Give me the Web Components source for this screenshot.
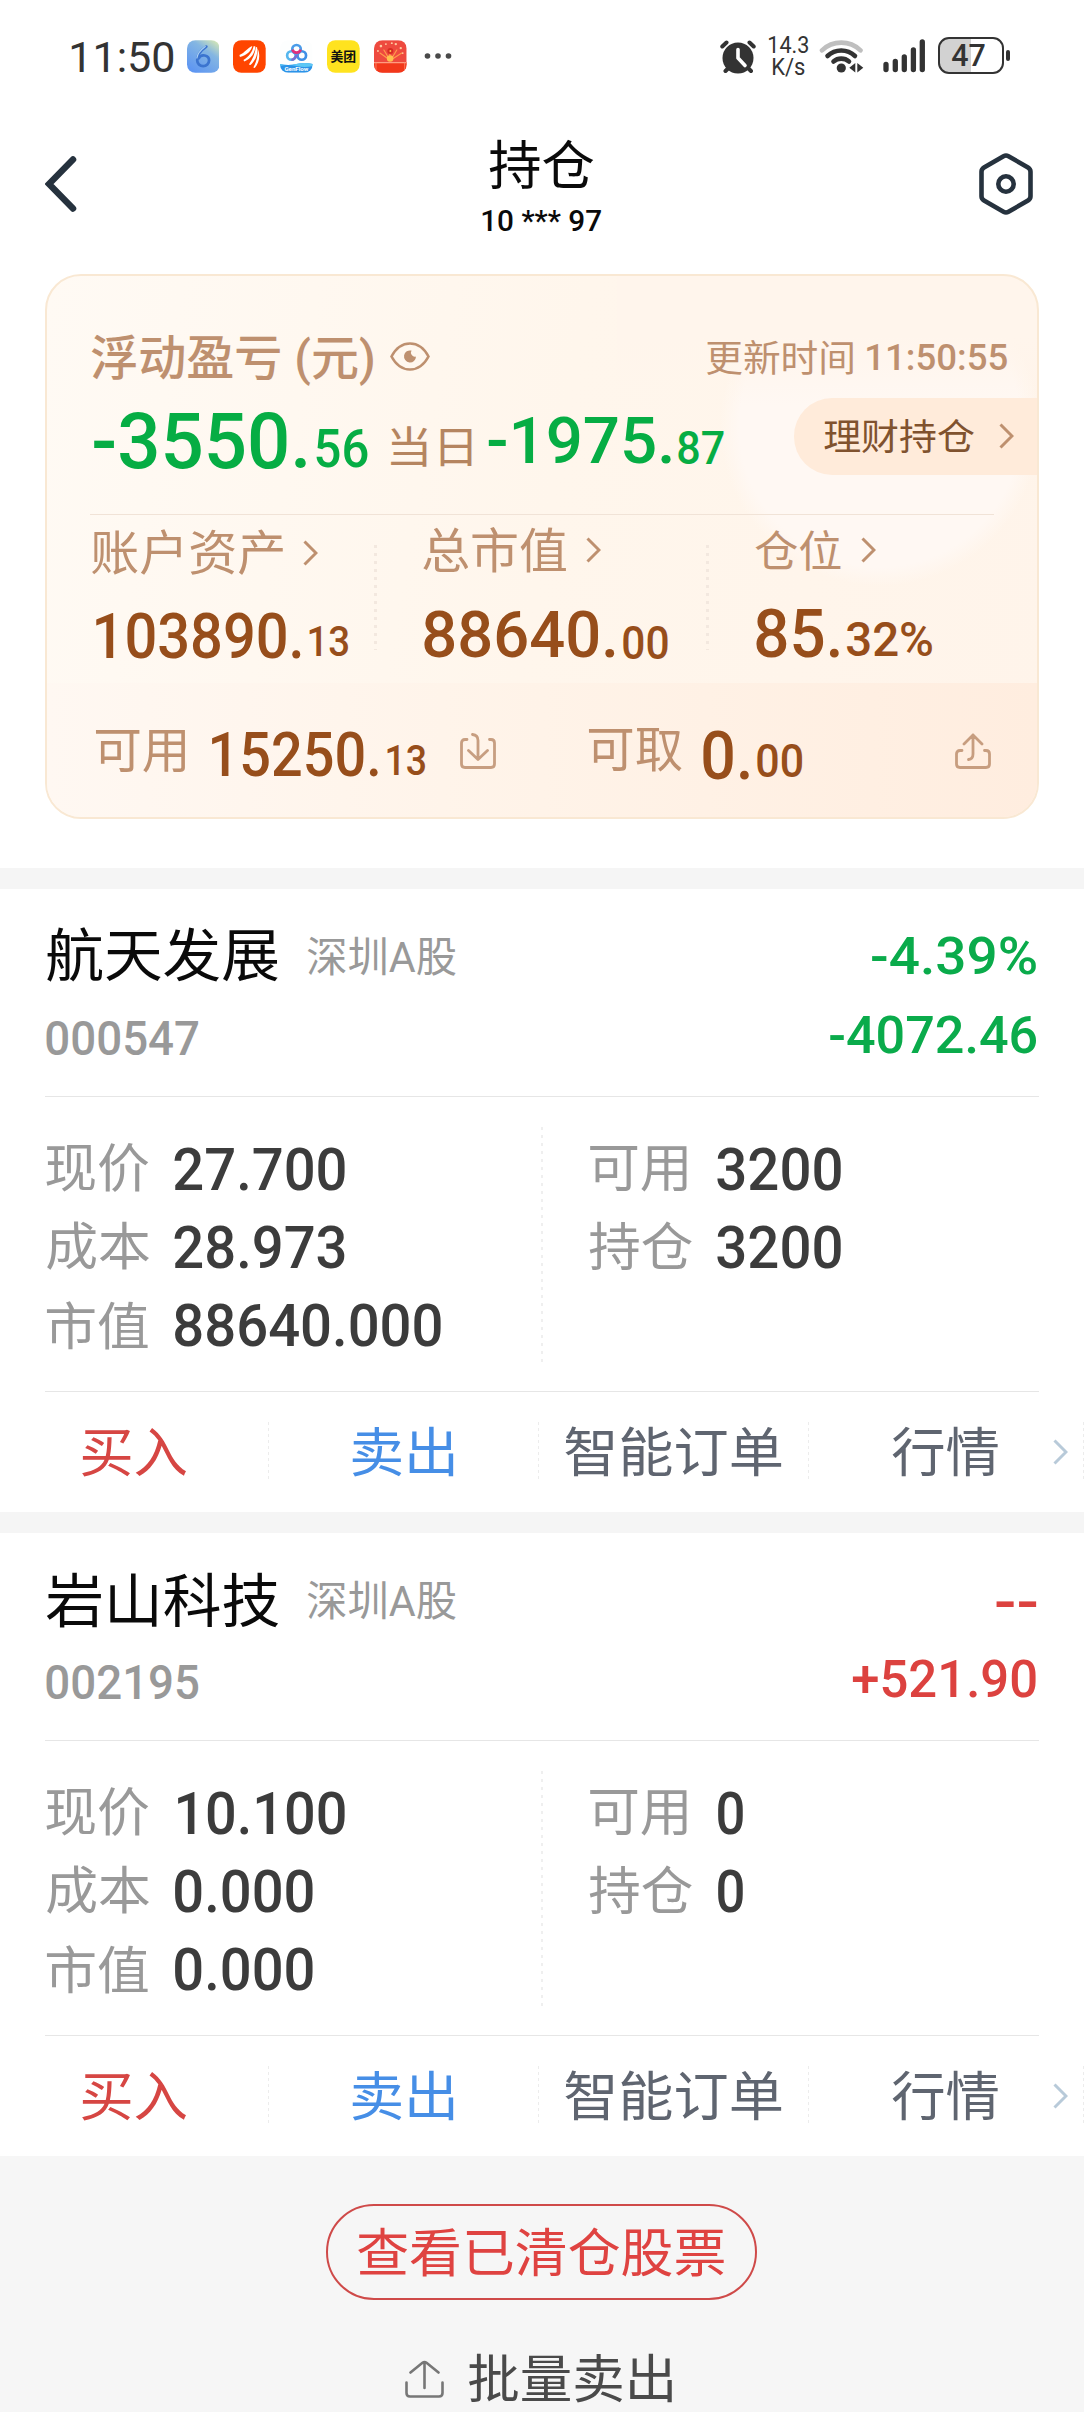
<!DOCTYPE html>
<html lang="zh-CN">
<head>
<meta charset="utf-8">
<meta name="viewport" content="width=device-width">
<title>持仓</title>
<style>
  html, body {
    margin: 0;
    background: #fff;
    font-family: Roboto, "Noto Sans CJK SC", sans-serif;
  }
  body {
    width: 1084px;
    height: 2412px;
    overflow: hidden;
    display: flex;
    flex-direction: column;
  }
</style>
</head>
<body>
<status-bar></status-bar>
<page-header></page-header>
<asset-card></asset-card>
<stock-card
  name="航天发展|232" code="000547|152"
  percent="-4.39%|164|39|47" profit="-4072.46|206" tone="#0aab4b"
  price="27.700|171" cost="28.973|171" value="88640.000|267"
  usable="3200|124" hold="3200|124"></stock-card>
<stock-card
  name="岩山科技|232" code="002195|152"
  percent="--|40|6|68" profit="+521.90|184" tone="#dc423f"
  price="10.100|168|3" cost="0.000|139" value="0.000|139"
  usable="0|26" hold="0|26"></stock-card>
<page-footer></page-footer>

<script>
const FAMILY = 'Roboto, "Noto Sans CJK SC", sans-serif';
const ctx = document.createElement("canvas").getContext("2d");

// Text whose glyphs fill a box of w x h pixels. "size" fixes the font size instead of h.
class InkText extends HTMLElement {
  constructor() {
    super();
    this.attachShadow({ mode: "open" });
    this.shadowRoot.innerHTML = `
      <style>
        :host {
          display: block;
          flex: none;
        }
        span {
          display: block;
          width: max-content;
          white-space: pre;
          transform-origin: 0 0;
        }
      </style>
      <span><slot></slot></span>
    `;
  }
  connectedCallback() {
    const w = Number(this.getAttribute("w"));
    const h = Number(this.getAttribute("h"));
    const weight = this.getAttribute("weight") || "400";
    const text = this.textContent;
    const span = this.shadowRoot.querySelector("span");

    let size = Number(this.getAttribute("size"));
    if (!size) {
      ctx.font = `${weight} 100px ${FAMILY}`;
      const m = ctx.measureText(text);
      size = (h * 100) / (m.actualBoundingBoxAscent + m.actualBoundingBoxDescent);
    }
    ctx.font = `${weight} ${size}px ${FAMILY}`;
    const m = ctx.measureText(text);
    const scale = w / (m.actualBoundingBoxLeft + m.actualBoundingBoxRight);
    const baseline = (h + m.fontBoundingBoxAscent - m.fontBoundingBoxDescent) / 2;
    const tx = m.actualBoundingBoxLeft * scale - 0.8;
    const ty = m.actualBoundingBoxAscent - baseline;

    this.style.width = w + "px";
    this.style.height = h + "px";
    span.style.font = `${weight} ${size}px/${h}px ${FAMILY}`;
    span.style.transform = `translate(${tx}px, ${ty}px) scaleX(${scale})`;
  }
}
customElements.define("ink-text", InkText);

// o: ml, mt = margins, weight, size, color
function ink(text, w, h, o = {}) {
  const style = `margin:${o.mt || 0}px 0 0 ${o.ml || 0}px;${o.color ? "color:" + o.color : ""}`;
  return `<ink-text w="${w}" h="${h}" weight="${o.weight || 400}" ${o.size ? `size="${o.size}"` : ""} style="${style}">${text}</ink-text>`;
}

class ChevronIcon extends HTMLElement {
  connectedCallback() {
    this.attachShadow({ mode: "open" });
    this.shadowRoot.innerHTML = `
      <style>
        :host { display: block; flex: none; width: 15px; height: 26px; }
        svg { display: block; }
      </style>
      <svg width="15" height="26" viewBox="0 0 15 26" fill="none" stroke="currentColor" stroke-width="3">
        <path d="M1.5 1.5 13 13 1.5 24.5"/>
      </svg>
    `;
  }
}
customElements.define("chevron-icon", ChevronIcon);

class StatusBar extends HTMLElement {
  constructor() {
    super();
    this.attachShadow({ mode: "open" });
    this.shadowRoot.innerHTML = `
      <style>
        :host {
          display: flex;
          justify-content: space-between;
          height: 110px;
          flex: none;
          box-sizing: border-box;
          padding: 36px 74px 0 72px;
          color: #333;
        }
        div { display: flex; align-items: flex-start; }
        svg { display: block; flex: none; }
        .apps { gap: 14.3px; margin: 4px 0 0 12.5px; }
        .net { flex-direction: column; margin: 1px 0 0 13px; }
        .battery {
          box-sizing: border-box;
          width: 66px;
          height: 37px;
          margin: 1px 0 0 12.5px;
          border: 2.5px solid #333;
          border-radius: 11px;
          background: linear-gradient(90deg, #d2d2d2 50%, #fff 50%);
        }
        .nub { width: 4px; height: 11px; margin: 14px 0 0 2.5px; border-radius: 2px; background: #333; }
      </style>
      <div>
        ${ink("11:50", 102, 32, { mt: 5.5 })}
        <div class="apps">
          <svg width="32.7" height="33" viewBox="0 0 33 33">
            <defs><linearGradient id="a" x1="1" y1="0" x2=".3" y2="1">
              <stop offset="0" stop-color="#e3efaf"/><stop offset=".4" stop-color="#84b6e2"/><stop offset="1" stop-color="#5f97f2"/>
            </linearGradient></defs>
            <rect width="33" height="33" rx="8.5" fill="url(#a)"/>
            <path d="M19.500 6.500C15 9.500 10.300 14.500 10.300 20.300a6 6 0 0 0 12 0 5.500 5 0 0 0-10.500-2" fill="none" stroke="#3b74cf" stroke-width="2.800" stroke-linecap="round" stroke-linejoin="round"/>
            <path d="M18.500 6.500C14.500 9.500 10.500 14 10 18" fill="none" stroke="#a9cff3" stroke-width="1.200" stroke-linecap="round"/>
          </svg>
          <svg width="32.7" height="33" viewBox="0 0 33 33">
            <rect width="33" height="33" rx="8.5" fill="#ff4500"/>
            <g fill="#fff">
              <path d="M6.500 15C12 13 15 7.500 19.500 6c-1 5-5.500 9.500-12.500 11z"/>
              <path d="M10.500 20C16 17 19.500 12 20.800 6.200h1.700C22.500 13 18 19 11.500 21.500z"/>
              <path d="M16 24.500C20 19 22.500 13 23 6.800l1.300.4c1 7-1.300 13-6.600 18z"/>
              <path d="M20.500 27.500c3.500-6 4.800-12.500 4.300-19 3 6 2 14-2.800 19.500z"/>
            </g>
          </svg>
          <svg width="32.7" height="33" viewBox="0 0 33 33">
            <defs><clipPath id="c"><rect width="33" height="33" rx="8.5"/></clipPath></defs>
            <g clip-path="url(#c)">
              <rect width="33" height="33" fill="#fdfefe"/>
              <path d="M0 24q8 2 16.500 0T33 24v9H0z" fill="#2b93e8"/>
              <path d="M0 24q8 2 16.500 0T33 24v2q-8 2-16.500 0T0 26z" fill="#5cc7f5"/>
            </g>
            <g fill="none" stroke-width="2.7">
              <circle cx="11.500" cy="15.500" r="4.300" stroke="#55b6ee"/>
              <circle cx="22" cy="15.500" r="4.300" stroke="#3f8fe6"/>
              <path d="M11.500 19.800a4.300 4.300 0 0 0 3.500-1.800l3.500-5" stroke="#7a6ed0"/>
              <circle cx="16.700" cy="9.200" r="4.300" stroke="#4a9ce9"/>
              <path d="M12.600 9.500a4.300 4.300 0 0 0 8.200 0" stroke="#e0307c"/>
            </g>
            <text x="16.500" y="31" font-size="6.200" font-weight="700" text-anchor="middle" fill="#fff" textLength="24">GenFlow</text>
          </svg>
          <svg width="32.7" height="33" viewBox="0 0 33 33">
            <rect width="33" height="33" rx="8.5" fill="#ffe31f"/>
            <text x="16.500" y="21.500" font-size="13" font-weight="700" text-anchor="middle" fill="#111" textLength="26">美团</text>
          </svg>
          <svg width="32.7" height="33" viewBox="0 0 33 33">
            <defs><clipPath id="r"><rect width="33" height="33" rx="8.5"/></clipPath></defs>
            <g clip-path="url(#r)">
              <rect width="33" height="33" fill="#ee4a3f"/>
              <path d="M0 22h33v11H0z" fill="#f2381a"/>
              <path d="M0 22h33v1.300H0z" fill="#ff9b80"/>
              <path d="M2 22v11M31 22v11" stroke="#ff8d70" stroke-width=".8"/>
            </g>
            <g stroke="#ff9c4a" stroke-width="1.200" stroke-linecap="round">
              <path d="M16 20 6 13M16 20 10 10M16 20V13M17 20 23 10M17 20 28 13"/>
            </g>
            <circle cx="16.500" cy="11" r="3" fill="#d92b22"/>
            <circle cx="16.500" cy="11" r="1" fill="#ffc04d"/>
            <circle cx="16.300" cy="18.500" r="3.300" fill="#ffc04d"/>
            <g fill="#ffc9a0">
              <circle cx="7" cy="6" r="1.300"/><circle cx="12" cy="4" r="1"/><circle cx="22" cy="4" r="1.200"/>
              <circle cx="27" cy="8" r="1.200"/><circle cx="4" cy="11" r="1"/><circle cx="29" cy="13" r=".9"/><circle cx="18" cy="3" r="1"/>
            </g>
          </svg>
          <svg width="28" height="33" viewBox="0 0 28 33" fill="#4a4a4a" style="margin-left:3px">
            <circle cx="3.500" cy="16" r="2.800"/><circle cx="14" cy="16" r="2.800"/><circle cx="24.500" cy="16" r="2.800"/>
          </svg>
        </div>
      </div>
      <div>
        <svg width="36" height="34" viewBox="0 0 36 34" style="margin:4px 0 0 -1px">
          <g stroke="#333" stroke-width="4" stroke-linecap="round">
            <path d="M2.300 6.500 6.500 2.500M33.700 6.500 29.500 2.500M5.500 31 9 27.500M31 31 27.500 27.500"/>
          </g>
          <circle cx="18" cy="18" r="15.500" fill="#333"/>
          <path d="M18 9.500V18l7 7.500" fill="none" stroke="#fff" stroke-width="3.600" stroke-linecap="round" stroke-linejoin="round"/>
        </svg>
        <div class="net">
          ${ink("14.3", 40, 17.5)}
          ${ink("K/s", 33, 18.5, { mt: 3.5, ml: 4 })}
        </div>
        <svg width="45" height="36" viewBox="0 0 45 36" style="margin:2px 0 0 10.5px">
          <g fill="none" stroke="#333" stroke-width="4.600" stroke-linecap="round">
            <path d="M3 12.300a28 28 0 0 1 38.500 0" stroke="#bfbfbf"/>
            <path d="M8.500 18a20 20 0 0 1 27.500 0"/>
            <path d="M14.500 23.500a12 12 0 0 1 15.500 0"/>
          </g>
          <circle cx="22.300" cy="30" r="4.600" fill="#333"/>
          <path d="M36.300 25v9.500l-6-4.700zM38.300 25v9.500l6-4.700z" fill="#333"/>
        </svg>
        <svg width="43" height="36" viewBox="0 0 43 36" stroke="#333" stroke-width="5.300" stroke-linecap="round" style="margin:2px 0 0 18px">
          <path d="M4 26.500v5M13.300 23.500v8M22.300 19v12.500M31.400 12v19.500M40.300 4v27.500"/>
        </svg>
        <div class="battery">${ink("47", 33.5, 23, { ml: 12.5, mt: 5, weight: 500 })}</div>
        <div class="nub"></div>
      </div>
    `;
  }
}
customElements.define("status-bar", StatusBar);

class PageHeader extends HTMLElement {
  constructor() {
    super();
    this.attachShadow({ mode: "open" });
    this.shadowRoot.innerHTML = `
      <style>
        :host {
          display: grid;
          grid-template-columns: 1fr auto 1fr;
          height: 164px;
          flex: none;
          box-sizing: border-box;
          padding: 30px 45px 0;
          color: #0a0a0a;
        }
        svg { display: block; }
        .back { margin-top: 16px; }
        .setting { margin: 13px 6px 0 auto; }
        .title { display: flex; flex-direction: column; align-items: center; }
      </style>
      <svg class="back" width="32" height="56" viewBox="0 0 32 56" fill="none" stroke="#26323e" stroke-width="6.500" stroke-linecap="round">
        <path d="M28 3.500 4 28 28 52.500"/>
      </svg>
      <div class="title">
        ${ink("持仓", 105, 50.5)}
        ${ink("10 *** 97", 119, 22, { mt: 19, weight: 500 })}
      </div>
      <svg class="setting" width="54" height="62" viewBox="0 0 54 62" fill="none" stroke="#26323e" stroke-width="4.600">
        <path d="M24.500 3.200q2.500-1.400 5 0l19.500 11.300q2.500 1.500 2.500 4.300v24.400q0 2.800-2.500 4.300L29.500 58.800q-2.500 1.400-5 0L5 47.500q-2.500-1.500-2.500-4.300V18.800q0-2.800 2.500-4.300z"/>
        <circle cx="27" cy="31" r="7.700"/>
      </svg>
    `;
  }
}
customElements.define("page-header", PageHeader);

class AssetCard extends HTMLElement {
  constructor() {
    super();
    this.attachShadow({ mode: "open" });
    const green = "#06ad44";
    const brown = "#974e1b";
    this.shadowRoot.innerHTML = `
      <style>
        :host {
          display: block;
          box-sizing: border-box;
          flex: none;
          height: 545px;
          margin: 0 45px 49px;
          border: 2px solid #f9e8d3;
          border-radius: 36px;
          overflow: hidden;
          color: #be906f;
          background:
            linear-gradient(#fff5ec 0 60px, #fff5ec00 130px) 100% 0 / 420px 130px no-repeat,
            radial-gradient(circle 160px at 833px 150px, #fff8f3 0 88%, #fff8f300 100%),
            linear-gradient(100deg, #fffaf4, #fff6ec 50%, #fff4ea);
        }
        div { display: flex; align-items: flex-start; }
        svg { display: block; flex: none; }
        .top { height: 45px; padding: 57.500px 29px 0 45px; }
        .profit { height: 77px; margin-top: 19.500px; padding-left: 48px; }
        .wealth {
          box-sizing: border-box;
          width: 243px;
          height: 77px;
          margin-left: auto;
          padding: 21px 0 0 31px;
          border-radius: 38px 0 0 38px;
          background: #ffebda;
        }
        .wealth chevron-icon { margin: 4px 0 0 24px; }
        hr { width: 904px; height: 1px; margin: 39px 0 0 43px; border: 0; background: #f1e3d7; }
        .columns { display: grid; grid-template-columns: 327px 332px 1fr; height: 168px; }
        .column { display: block; height: 100%; box-sizing: border-box; }
        .column + .column {
          background: repeating-linear-gradient(#f3e8df 0 3px, transparent 3px 8px) 0 30px / 3px 105px no-repeat;
        }
        .label { height: 82px; }
        .cash {
          height: 134px;
          padding: 0 46px 0 48.5px;
          background: linear-gradient(90deg, #fff8f2, #fff3e8 50%, #ffeddf);
        }
      </style>
      <div class="top">
        ${ink("浮动盈亏 (元)", 282, 45, { size: 47.5, weight: 500 })}
        <svg width="40" height="29" viewBox="0 0 40 29" fill="none" stroke="currentColor" stroke-width="2.600" style="margin:8px 0 0 16px">
          <path d="M1.500 14.500C6 6 13 1.500 20 1.500S34 6 38.500 14.500C34 23 27 27.500 20 27.500S6 23 1.500 14.500z"/>
          <path d="M21.500 8.600A6 6 0 1 0 26 14.500a4 4 0 0 1-4.500-5.900z" fill="currentColor" stroke="none"/>
        </svg>
        ${ink("更新时间", 146.5, 35, { mt: 5, ml: 276.5 })}
        ${ink("11:50:55", 140, 27.5, { mt: 10.5, ml: 15, weight: 500 })}
      </div>
      <div class="profit">
        ${ink("-3550.", 212, 57, { mt: 14, weight: 500, color: green })}
        ${ink("56", 51.5, 39.5, { mt: 31, ml: 9.5, weight: 500, color: green })}
        ${ink("当日", 81, 41, { mt: 28, ml: 24, color: "#b58560" })}
        ${ink("-1975.", 183, 48.5, { mt: 18.5, ml: 16, weight: 500, color: green })}
        ${ink("87", 46, 34, { mt: 32.5, ml: 7, weight: 500, color: green })}
        <div class="wealth">
          ${ink("理财持仓", 150, 34.5, { color: "#80522e" })}
          <chevron-icon></chevron-icon>
        </div>
      </div>
      <hr>
      <div class="columns">
        <div class="column" style="padding:14px 0 0 45px">
          <div class="label" style="height:83px">
            ${ink("账户资产", 191.5, 45)}
            <chevron-icon style="margin:11px 0 0 19px"></chevron-icon>
          </div>
          <div>
            ${ink("103890.", 204.5, 46, { ml: 4.5, weight: 500, color: brown })}
            ${ink("13", 39, 31.5, { mt: 14, ml: 9, weight: 500, color: brown })}
          </div>
        </div>
        <div class="column" style="padding:11.5px 0 0 50px">
          <div class="label" style="height:84.5px">
            ${ink("总市值", 143.5, 45)}
            <chevron-icon style="margin:10px 0 0 18.5px"></chevron-icon>
          </div>
          <div>
            ${ink("88640.", 190.5, 48.5, { ml: 1, weight: 500, color: brown })}
            ${ink("00", 44.5, 34, { mt: 14.5, ml: 8, weight: 500, color: brown })}
          </div>
        </div>
        <div class="column" style="padding:13.5px 0 0 50px">
          <div class="label" style="height:79.5px">
            ${ink("仓位", 86, 41)}
            <chevron-icon style="margin:8.5px 0 0 19px"></chevron-icon>
          </div>
          <div>
            ${ink("85.", 83, 49, { ml: 1, weight: 500, color: brown })}
            ${ink("32%", 86, 35, { mt: 14, ml: 7, weight: 500, color: brown })}
          </div>
        </div>
      </div>
      <div class="cash">
        ${ink("可用", 90.5, 43, { mt: 46.5 })}
        ${ink("15250.", 166, 45, { mt: 48, ml: 26.5, weight: 500, color: brown })}
        ${ink("13", 38, 31.5, { mt: 61.5, ml: 9.5, weight: 500, color: brown })}
        <svg width="36" height="36" viewBox="0 0 36 36" fill="none" stroke="currentColor" stroke-width="2.800" stroke-linecap="round" stroke-linejoin="round" opacity=".85" style="margin:49.5px 0 0 33.5px">
          <path d="M7 6.500H5Q1.500 6.500 1.500 10V31q0 3.500 3.500 3.500H31q3.500 0 3.500-3.500V10q0-3.500-3.500-3.500H29.500M12.500 1.500q5.500.5 5.500 6V26M8.500 17.500 18 26.500 27.500 17.500"/>
        </svg>
        ${ink("可取", 94, 43.5, { mt: 45, ml: 93.5 })}
        ${ink("0.", 46, 49, { mt: 46.5, ml: 21, weight: 500, color: brown })}
        ${ink("00", 45, 34, { mt: 61, ml: 7.5, weight: 500, color: brown })}
        <svg width="36" height="36" viewBox="0 0 36 36" fill="none" stroke="currentColor" stroke-width="2.800" stroke-linecap="round" stroke-linejoin="round" opacity=".85" style="margin:49.5px 0 0 auto">
          <path d="M7 17.500H5Q1.500 17.500 1.500 21V31q0 3.500 3.500 3.500H31q3.500 0 3.500-3.500V21q0-3.500-3.500-3.500H29.500M13.500 26.500q4.500-.5 4.500-5.500V2M9 11 18 2 27 11"/>
        </svg>
      </div>
    `;
  }
}
customElements.define("asset-card", AssetCard);

class StockCard extends HTMLElement {
  constructor() {
    super();
    this.attachShadow({ mode: "open" });
  }
  // attribute "text|width|..." as a list
  _parts(name) {
    const [text, ...rest] = this.getAttribute(name).split("|");
    return [text, ...rest.map(Number)];
  }
  _number(name) {
    const [text, w, shift = 0] = this._parts(name);
    return ink(text, w, 43.5, { mt: 5, ml: shift, weight: 500, color: "#3c3c3c" });
  }
  connectedCallback() {
    const [name, nameW] = this._parts("name");
    const [code, codeW] = this._parts("code");
    const [percent, percentW, percentH, percentTop] = this._parts("percent");
    const [profit, profitW] = this._parts("profit");
    const profitTop = 125.5 - percentTop - percentH;
    this.shadowRoot.innerHTML = `
      <style>
        :host {
          display: block;
          flex: none;
          box-sizing: border-box;
          height: 644px;
          border-top: 21px solid #f5f5f5;
          color: #999;
        }
        .head {
          display: flex;
          justify-content: space-between;
          box-sizing: border-box;
          height: 208px;
          margin: 0 45px;
          padding: 0 2px;
          border-bottom: 1px solid #e6e6e6;
        }
        .name { display: flex; }
        .profit {
          display: flex;
          flex-direction: column;
          align-items: flex-end;
          color: ${this.getAttribute("tone")};
        }
        .body {
          display: grid;
          grid-template-columns: 496px 1fr;
          box-sizing: border-box;
          height: 295px;
          margin: 0 45px;
          border-bottom: 1px solid #e6e6e6;
        }
        .side { padding: 45px 0 0 2px; }
        .side + .side {
          padding-left: 49px;
          background: repeating-linear-gradient(#efefef 0 3px, transparent 3px 8px) 0 30px / 2px 235px no-repeat;
        }
        .line { display: flex; height: 78px; }
        .key { width: 127.5px; flex: none; }
        .actions {
          display: grid;
          grid-template-columns: 269px 270px 270px 1fr;
          height: 120px;
        }
        .action {
          display: flex;
          justify-content: center;
          padding-top: 35px;
          background: repeating-linear-gradient(#ececec 0 3px, transparent 3px 6px) 100% 30px / 1px 57px no-repeat;
        }
        .last { justify-content: flex-start; padding-left: 84px; }
        .last chevron-icon { margin: 12px 0 0 54px; color: #b8cad9; }
      </style>
      <div class="head">
        <div>
          <div class="name">
            ${ink(name, nameW, 54.5, { mt: 39, color: "#0a0a0a" })}
            ${ink("深圳A股", 149, 39, { mt: 46.5, ml: 29 })}
          </div>
          ${ink(code, codeW, 35, { mt: 38.5, weight: 500 })}
        </div>
        <div class="profit">
          ${ink(percent, percentW, percentH, { mt: percentTop, weight: 500 })}
          ${ink(profit, profitW, 39, { mt: profitTop, weight: 500 })}
        </div>
      </div>
      <div class="body">
        <div class="side">
          <div class="line"><div class="key">${ink("现价", 103, 49, { mt: 0.5 })}</div>${this._number("price")}</div>
          <div class="line"><div class="key">${ink("成本", 103, 49, { mt: 0.5 })}</div>${this._number("cost")}</div>
          <div class="line"><div class="key">${ink("市值", 102, 49, { mt: 3 })}</div>${this._number("value")}</div>
        </div>
        <div class="side">
          <div class="line"><div class="key">${ink("可用", 98, 46, { mt: 3.5 })}</div>${this._number("usable")}</div>
          <div class="line"><div class="key">${ink("持仓", 103, 49, { mt: 0.5 })}</div>${this._number("hold")}</div>
        </div>
      </div>
      <div class="actions">
        <div class="action">${ink("买入", 105, 49, { color: "#d64643" })}</div>
        <div class="action">${ink("卖出", 102, 50.5, { color: "#468ee6" })}</div>
        <div class="action">${ink("智能订单", 216, 50.5, { color: "#5f6570" })}</div>
        <div class="action last">
          ${ink("行情", 106, 50.5, { color: "#5f6570" })}
          <chevron-icon></chevron-icon>
        </div>
      </div>
    `;
  }
}
customElements.define("stock-card", StockCard);

class PageFooter extends HTMLElement {
  constructor() {
    super();
    this.attachShadow({ mode: "open" });
    this.shadowRoot.innerHTML = `
      <style>
        :host {
          display: flex;
          flex-direction: column;
          align-items: center;
          flex: 1;
          padding-top: 48px;
          background: #f6f6f6;
        }
        .cleared {
          display: flex;
          justify-content: center;
          box-sizing: border-box;
          width: 431px;
          height: 96px;
          margin-right: 1px;
          padding-top: 20.5px;
          border: 2px solid #cf4a49;
          border-radius: 48px;
          color: #df4341;
        }
        .batch { display: flex; margin: 53px 6px 0 0; color: #4a4a4a; }
      </style>
      <div class="cleared">${ink("查看已清仓股票", 367, 49)}</div>
      <div class="batch">
        <svg width="39" height="38" viewBox="0 0 39 38" fill="none" stroke="#777" stroke-width="2.600" stroke-linecap="round" style="margin-top:6.5px">
          <path d="M1.500 22.500V33q0 3.500 3.500 3.500H34q3.500 0 3.500-3.500V22.500M19.500 28V2M5.500 12.500 17.500 2.800q2-1.600 4 0L33.500 12.500"/>
        </svg>
        ${ink("批量卖出", 204, 49, { ml: 25 })}
      </div>
    `;
  }
}
customElements.define("page-footer", PageFooter);
</script>
</body>
</html>
